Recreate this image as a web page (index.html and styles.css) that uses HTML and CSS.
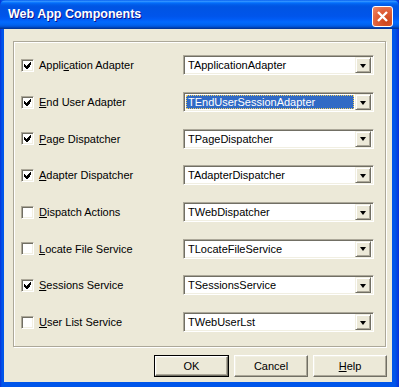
FILE: index.html
```html
<!DOCTYPE html>
<html lang="en">
<head>
    <meta charset="UTF-8">
    <meta name="viewport" content="width=device-width, initial-scale=1.0">
    <title>Web App Components</title>
    <link rel="stylesheet" href="styles.css">
</head>
<body>
    <div class="window">
        <!-- title bar -->
        <div class="titlebar">
            <span class="title">Web App Components</span>
            <span class="close">
                <svg width="13" height="13" viewBox="0 0 13 13">
                    <path d="M2 2 L11 11 M11 2 L2 11" stroke="#fff" stroke-width="2.4" fill="none"/>
                </svg>
            </span>
        </div>

        <div class="client">
            <div class="group">
                <div class="row">
                    <span class="check on"></span>
                    <span class="label">Appli<u>c</u>ation Adapter</span>
                    <div class="combo"><span class="value">TApplicationAdapter</span><span class="drop"></span></div>
                </div>
                <div class="row">
                    <span class="check on"></span>
                    <span class="label"><u>E</u>nd User Adapter</span>
                    <div class="combo"><span class="value selected">TEndUserSessionAdapter</span><span class="drop"></span></div>
                </div>
                <div class="row">
                    <span class="check on"></span>
                    <span class="label"><u>P</u>age Dispatcher</span>
                    <div class="combo"><span class="value">TPageDispatcher</span><span class="drop"></span></div>
                </div>
                <div class="row">
                    <span class="check on"></span>
                    <span class="label"><u>A</u>dapter Dispatcher</span>
                    <div class="combo"><span class="value">TAdapterDispatcher</span><span class="drop"></span></div>
                </div>
                <div class="row">
                    <span class="check"></span>
                    <span class="label"><u>D</u>ispatch Actions</span>
                    <div class="combo"><span class="value">TWebDispatcher</span><span class="drop"></span></div>
                </div>
                <div class="row">
                    <span class="check"></span>
                    <span class="label"><u>L</u>ocate File Service</span>
                    <div class="combo"><span class="value">TLocateFileService</span><span class="drop"></span></div>
                </div>
                <div class="row">
                    <span class="check on"></span>
                    <span class="label"><u>S</u>essions Service</span>
                    <div class="combo"><span class="value">TSessionsService</span><span class="drop"></span></div>
                </div>
                <div class="row">
                    <span class="check"></span>
                    <span class="label"><u>U</u>ser List Service</span>
                    <div class="combo"><span class="value">TWebUserLst</span><span class="drop"></span></div>
                </div>
            </div>

            <div class="buttons">
                <button class="btn default">OK</button>
                <button class="btn">Cancel</button>
                <button class="btn"><u>H</u>elp</button>
            </div>
        </div>
    </div>
</body>
</html>
```

FILE: styles.css
```css
body {
    margin: 0;
    font-family: 'Liberation Sans', Arial, sans-serif;
    font-size: 11px;
    color: #000;
}
.window {
    width: 399px;
    height: 387px;
    background: linear-gradient(to right, #0831d9 0px, #0055ea 2px, #0055ea 395px, #0831d9 399px);
    display: flex;
    flex-direction: column;
}
.titlebar {
    height: 29px;
    flex: none;
    display: flex;
    align-items: center;
    justify-content: space-between;
    padding: 0 6px 0 8px;
    background: linear-gradient(to bottom, #0058ee 0%, #3593ff 4%, #288eff 6%, #127dff 8%, #036ffc 10%, #0262ee 14%, #0057e5 20%, #0054e3 24%, #0055eb 56%, #005bf5 66%, #026afe 76%, #0062ef 86%, #0052d6 92%, #0040ab 96%, #003092 100%);
    border-radius: 6px 6px 0 0;
}
.title {
    color: #fff;
    font-weight: bold;
    font-size: 12.5px;
    text-shadow: 1px 1px #0f1089;
    margin-top: -1px;
}
.close {
    width: 19px;
    height: 19px;
    border: 1px solid #fff;
    border-radius: 3px;
    background: radial-gradient(circle at 70% 75%, #cc4418 0%, #e0603a 55%, #f08a68 100%);
    display: flex;
    align-items: center;
    justify-content: center;
    margin-top: 3px;
}
.client {
    flex: 1;
    margin: 0 7px 5px 4px;
    background: #ece9d8;
    padding: 12px 0 0 9px;
}
.group {
    width: 371px;
    height: 299px;
    border: 1px solid #aca899;
    box-shadow: inset 1px 1px #fff, 1px 1px #fff;
    padding-top: 5px;
    box-sizing: content-box;
    display: grid;
    grid-auto-rows: 36.7px;
    align-content: start;
    align-items: center;
}
.row {
    display: flex;
    align-items: center;
}
.check {
    width: 13px;
    height: 13px;
    box-sizing: border-box;
    margin-left: 7px;
    background: #fff;
    border: 1px solid;
    border-color: #aca899 #fff #fff #aca899;
    box-shadow: inset 1px 1px #716f64, inset -1px -1px #f1efe2;
    position: relative;
}
.check.on::after {
    content: "";
    position: absolute;
    left: 2px;
    top: 2px;
    width: 7px;
    height: 7px;
    background: url("data:image/svg+xml,%3Csvg xmlns='http://www.w3.org/2000/svg' width='7' height='7' shape-rendering='crispEdges'%3E%3Cpath d='M6 0h1v3h-1zM5 1h1v4h-1zM4 2h1v4h-1zM3 3h1v4h-1zM2 4h1v3h-1zM1 3h1v3h-1zM0 2h1v3h-1z' fill='%23000'/%3E%3C/svg%3E") no-repeat;
}
.label {
    margin-left: 5px;
    width: 144px;
    white-space: nowrap;
}
.combo {
    width: 191px;
    height: 20px;
    box-sizing: border-box;
    margin-left: auto;
    margin-right: 12px;
    background: #fff;
    border: 1px solid;
    border-color: #aca899 #fff #fff #aca899;
    box-shadow: inset 1px 1px #716f64, inset -1px -1px #f1efe2;
    display: flex;
    align-items: center;
    padding: 2px;
}
.value {
    flex: 1;
    height: 14px;
    line-height: 14px;
    padding-left: 2px;
    white-space: nowrap;
}
.value.selected {
    background: #316ac5;
    color: #fff;
    outline: 1px dotted #f0d060;
    outline-offset: -1px;
    margin-right: 1px;
}
.drop {
    width: 16px;
    height: 16px;
    box-sizing: border-box;
    background: #ece9d8;
    border: 1px solid;
    border-color: #f1efe2 #716f64 #716f64 #f1efe2;
    box-shadow: inset 1px 1px #fff, inset -1px -1px #aca899;
    display: flex;
    align-items: center;
    justify-content: center;
}
.drop::after {
    content: "";
    border-left: 3.5px solid transparent;
    border-right: 3.5px solid transparent;
    border-top: 4px solid #000;
    margin-top: 1px;
}
.buttons {
    display: flex;
    justify-content: flex-end;
    gap: 5px;
    margin-top: 8px;
    padding-right: 5px;
}
.btn {
    width: 74px;
    height: 22px;
    font-family: 'Liberation Sans', Arial, sans-serif;
    font-size: 11px;
    background: #ece9d8;
    border: 1px solid;
    border-color: #fff #716f64 #716f64 #fff;
    box-shadow: inset -1px -1px #aca899, inset 1px 1px #f1efe2;
    padding: 0;
    color: #000;
}
.btn.default {
    outline: 1px solid #000;
    outline-offset: 0;
    width: 73px;
    height: 20px;
    margin: 1px;
}
```
